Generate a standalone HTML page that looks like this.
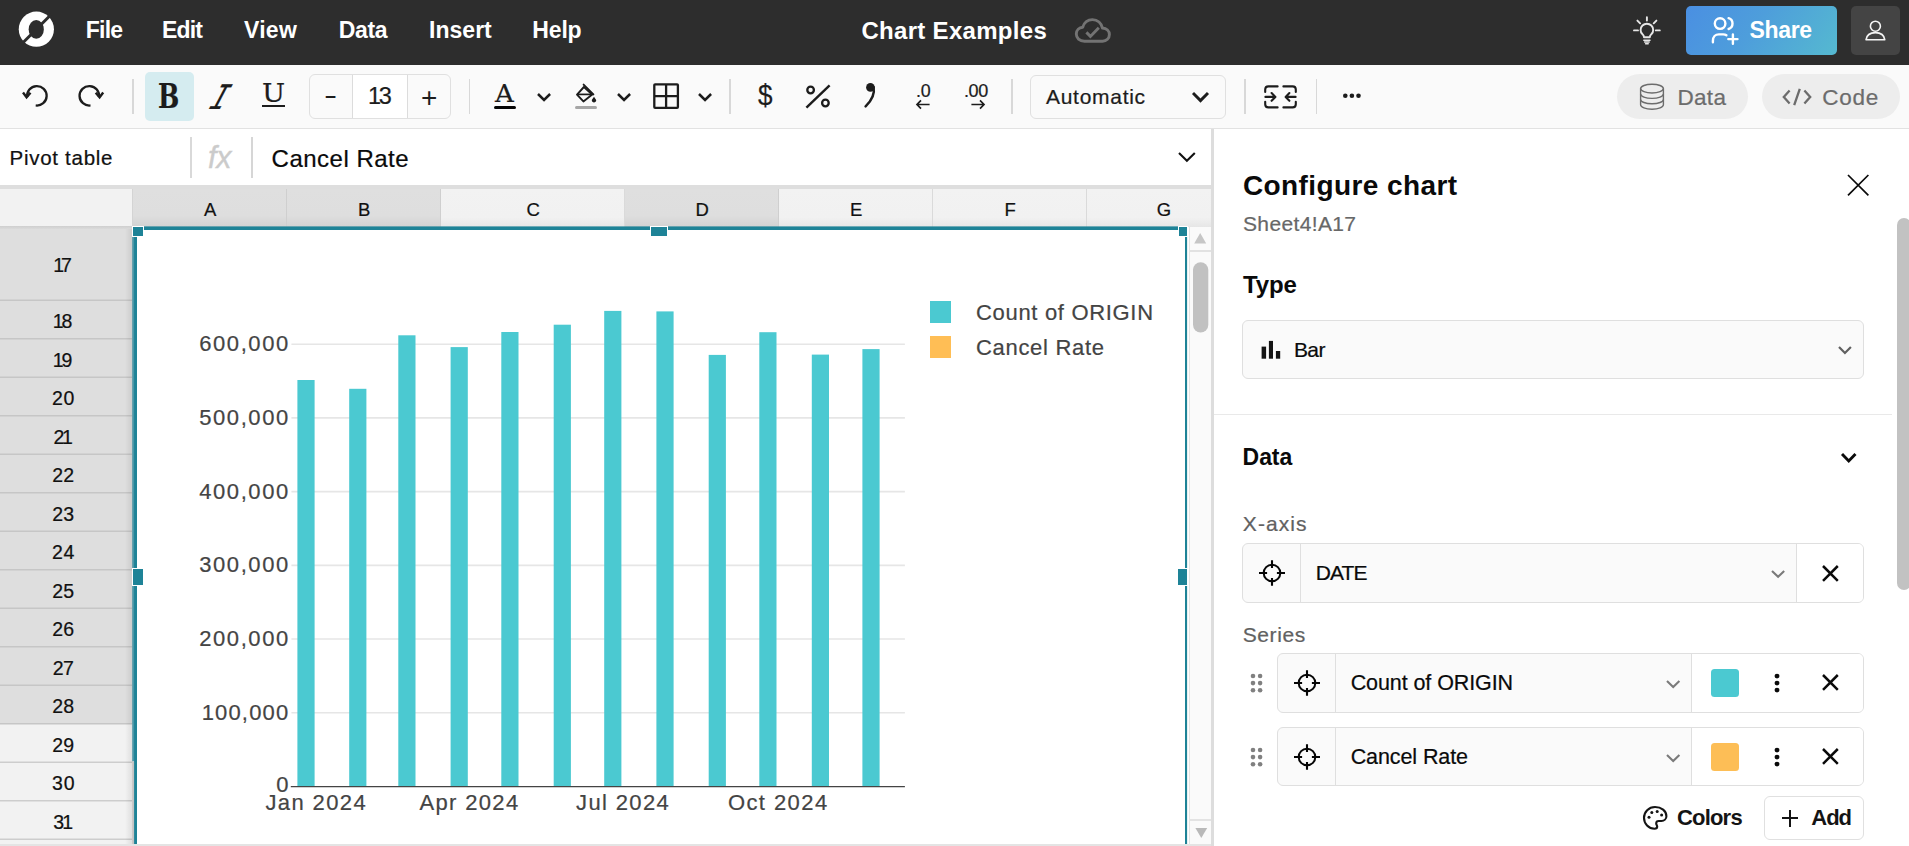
<!DOCTYPE html>
<html lang="en">
<head>
<meta charset="utf-8">
<title>Chart Examples</title>
<style>
*{box-sizing:border-box;margin:0;padding:0}
html,body{width:1909px;height:846px;overflow:hidden;background:#fff}
body{font-family:"Liberation Sans",sans-serif;color:#0a0a0a;position:relative}
.abs{position:absolute}
.t{position:absolute;white-space:nowrap;line-height:1;-webkit-text-stroke:0.22px currentColor}
svg{position:absolute;overflow:visible}
#top{left:0;top:0;width:1909px;height:64.6px;background:#2d2d2d}
#tb{left:0;top:64.6px;width:1909px;height:64.4px;background:#fafafa;border-bottom:1.2px solid #e2e2e2}
.sep{position:absolute;width:1.5px;background:#d8d8d8;top:79.2px;height:34.6px}
#fb{left:0;top:129px;width:1212px;height:56px;background:#fff}
#grid{left:0;top:185px;width:1212px;height:661px;background:#fff;overflow:hidden}
.dk{background:#dedede}.lt{background:#f2f2f2}
#panel{left:1214px;top:129px;width:695px;height:717px;background:#fff}
.box{position:absolute;border:1px solid #dfdfdf;border-radius:6px;background:#fafafa}
.vl{position:absolute;width:1.1px;background:#dfdfdf}
</style>
</head>
<body>
<div id="top" class="abs">
<svg style="left:18px;top:11px" width="37" height="37" viewBox="18 11 37 37">
<circle cx="36.35" cy="29.2" r="17.6" fill="#fff"/>
<ellipse cx="36.25" cy="29.4" rx="7.6" ry="9.4" fill="#2d2d2d"/>
<path d="M21.35 44.2 L51.35 14.2" stroke="#2d2d2d" stroke-width="3" fill="none"/>
</svg>
<div class="t" style="left:85.80px;top:18.60px;font-size:23.0px;letter-spacing:-0.79px;color:#ffffff;font-weight:bold;-webkit-text-stroke:0;">File</div>
<div class="t" style="left:162.10px;top:18.60px;font-size:23.0px;letter-spacing:-0.89px;color:#ffffff;font-weight:bold;-webkit-text-stroke:0;">Edit</div>
<div class="t" style="left:243.90px;top:18.60px;font-size:23.0px;letter-spacing:0.33px;color:#ffffff;font-weight:bold;-webkit-text-stroke:0;">View</div>
<div class="t" style="left:338.70px;top:18.60px;font-size:23.0px;letter-spacing:-0.34px;color:#ffffff;font-weight:bold;-webkit-text-stroke:0;">Data</div>
<div class="t" style="left:429.00px;top:18.60px;font-size:23.0px;letter-spacing:0.03px;color:#ffffff;font-weight:bold;-webkit-text-stroke:0;">Insert</div>
<div class="t" style="left:532.30px;top:18.60px;font-size:23.0px;letter-spacing:-0.16px;color:#ffffff;font-weight:bold;-webkit-text-stroke:0;">Help</div>
<div class="t" style="left:861.40px;top:18.67px;font-size:24.0px;letter-spacing:0.31px;color:#ffffff;font-weight:bold;-webkit-text-stroke:0;">Chart Examples</div>
<svg style="left:1074px;top:17px" width="38" height="27" viewBox="0 0 38 27">
<path d="M10.5 24.2 C5.5 24.2 2.3 21 2.3 17 C2.3 13.2 5.2 10.4 8.8 10.2 C10 5.6 13.8 2.6 18.4 2.6 C23.6 2.6 27.6 6.2 28.4 11 C32.6 11.2 35.4 14 35.4 17.6 C35.4 21.4 32.4 24.2 28.6 24.2 Z" fill="none" stroke="#737373" stroke-width="2.9" stroke-linejoin="round"/>
<path d="M12.4 15.4 L16.4 19.4 L24.8 10.8" fill="none" stroke="#737373" stroke-width="2.9"/>
</svg>
<svg style="left:1630px;top:12px" width="34" height="36" viewBox="1630 12 34 36" fill="none" stroke="#e6e6e6" stroke-width="1.9" stroke-linecap="round">
<path d="M1646.9 17.2V20.6 M1637.4 20.6 L1640.1 23.3 M1656.4 20.6 L1653.7 23.3 M1634 30.4H1638 M1655.8 30.4H1659.8"/>
<path d="M1644 37.3 C1644 35.6 1643.2 34.9 1642.3 34 C1641.2 32.9 1640.6 31.5 1640.6 29.9 C1640.6 26.5 1643.4 23.7 1646.9 23.7 C1650.4 23.7 1653.2 26.5 1653.2 29.9 C1653.2 31.5 1652.6 32.9 1651.5 34 C1650.6 34.9 1649.8 35.6 1649.8 37.3 Z" stroke-linejoin="round"/>
<path d="M1643.8 40.2H1650 M1644.6 42.1H1649.2 M1645.6 43.8H1648.2" stroke-width="1.5"/>
</svg>
<div class="abs" style="left:1686px;top:6px;width:151px;height:49px;border-radius:5px;background:linear-gradient(125deg,#4a8fe2 0%,#4e9edb 45%,#55b9d0 100%)"></div>
<svg style="left:1708px;top:14px" width="34" height="34" viewBox="1708 14 34 34" fill="none" stroke="#fff" stroke-width="2.4" stroke-linecap="round">
<circle cx="1720.1" cy="23.6" r="5.3"/>
<path d="M1712.9 42.3 V40.9 C1712.9 36.9 1715.4 34.4 1718.9 34.4 H1723.2 C1724.6 34.4 1725.6 34.7 1726.4 35.3"/>
<path d="M1728.6 18.2 C1730.9 18.9 1732.5 21 1732.5 23.6 C1732.5 26.2 1730.9 28.3 1728.6 29"/>
<path d="M1732.9 34.4 V43.8 M1728.3 39.1 H1737.5"/>
</svg>
<div class="t" style="left:1749.50px;top:18.50px;font-size:23.0px;letter-spacing:-0.34px;color:#ffffff;font-weight:bold;-webkit-text-stroke:0;">Share</div>
<div class="abs" style="left:1851px;top:6px;width:49px;height:49px;border-radius:5px;background:#444444"></div>
<svg style="left:1865px;top:20px" width="21" height="21" viewBox="0 0 21 21" fill="none" stroke="#f5f5f5" stroke-width="1.6" stroke-linejoin="round">
<circle cx="10.4" cy="6.2" r="5"/>
<path d="M1 19.8 C1.6 15.2 5.4 12.6 10.4 12.6 C15.4 12.6 19.2 15.2 19.8 19.8 Z"/>
</svg>
</div>
<div id="tb" class="abs"></div>
<svg style="left:0;top:0" width="120" height="128" viewBox="0 0 120 128" fill="none" stroke="#1c1c1c" stroke-width="2.3"><path d="M35.71 105.48 A9.75 9.75 0 1 0 27.24 97.16"/><path d="M23.00 92.50 L26.60 97.30 L30.50 92.80" stroke-width="2.4"/><path d="M90.49 105.48 A9.75 9.75 0 1 1 98.96 97.16"/><path d="M103.20 92.50 L99.60 97.30 L95.70 92.80" stroke-width="2.4"/></svg>
<div class="sep" style="left:132.25px"></div>
<div class="sep" style="left:468.75px"></div>
<div class="sep" style="left:729.25px"></div>
<div class="sep" style="left:1011.25px"></div>
<div class="sep" style="left:1244.25px"></div>
<div class="sep" style="left:1315.75px"></div>
<div class="abs" style="left:145px;top:72px;width:49px;height:49px;border-radius:5px;background:#d5ecf0"></div>
<div class="t" style="left:157.6px;top:79.9px;font-family:'DejaVu Serif Condensed','DejaVu Serif',serif;font-weight:bold;font-size:33.7px;color:#1c1c1c;transform:scaleX(.83);transform-origin:left top">B</div>
<div class="t" style="left:207.7px;top:80.6px;font-family:'Liberation Mono',monospace;font-size:37.5px;color:#1c1c1c;transform:skewX(-27.7deg) scaleX(.72);transform-origin:center center">I</div>
<div class="t" style="left:262px;top:81px;font-family:'DejaVu Serif',serif;font-size:25.6px;color:#1c1c1c;transform:scaleX(1.07);transform-origin:left top">U</div>
<div class="abs" style="left:262px;top:105px;width:23px;height:2px;background:#1c1c1c"></div>
<div class="abs" style="left:309px;top:74px;width:142px;height:45px;border:1px solid #e0e0e0;border-radius:6px;background:#fafafa;overflow:hidden"><div class="abs" style="left:42px;top:0;width:56px;height:45px;background:#fff;border-left:1px solid #dcdcdc;border-right:1px solid #dcdcdc"></div></div>
<div class="t" style="left:324.26px;top:81.9px;font-size:26px;color:#1c1c1c;-webkit-text-stroke:0;transform:scaleX(1.52);transform-origin:left top">-</div>
<div class="t" style="left:368.00px;top:85.13px;font-size:23.5px;letter-spacing:-2.28px;color:#1c1c1c;">13</div>
<div class="t" style="left:420.9px;top:83.5px;font-size:28px;color:#1c1c1c;-webkit-text-stroke:0">+</div>
<div class="t" style="left:495.2px;top:80.9px;font-family:'DejaVu Serif',serif;font-size:25px;color:#1c1c1c;transform:scaleX(1.04);transform-origin:left top">A</div>
<div class="abs" style="left:493.8px;top:105.9px;width:22.7px;height:3.1px;background:#050505;border-radius:1.6px"></div>
<svg style="left:535.15px;top:91.16px" width="18.1" height="12.0" viewBox="-3 -3 18.1 12.0"><path d="M0 0 L6.05 6.00 L12.10 0" fill="none" stroke="#1c1c1c" stroke-width="2.5"/></svg>
<svg style="left:575px;top:83px" width="23" height="21" viewBox="575 83 23 21" fill="none" stroke="#1c1c1c" stroke-width="1.9" stroke-linejoin="round">
<path d="M583.9 87 L592.2 94.6 L583.4 101.4 L577 94.6 Z"/>
<path d="M583.6 84.6 L593.4 94.4" stroke-linecap="round"/>
<path d="M577.4 94.4 H592.4" stroke-width="1.7"/>
<path d="M594 96.8 C595.2 98.4 596.2 99.6 596.2 100.6 C596.2 101.7 595.2 102.5 594 102.5 C592.8 102.5 591.8 101.7 591.8 100.6 C591.8 99.6 592.8 98.4 594 96.8 Z" fill="#1c1c1c" stroke="none"/>
</svg>
<div class="abs" style="left:575.1px;top:105.9px;width:21.8px;height:3.1px;background:#a6a6a6;border-radius:1.6px"></div>
<svg style="left:615.15px;top:91.16px" width="18.1" height="12.0" viewBox="-3 -3 18.1 12.0"><path d="M0 0 L6.05 6.00 L12.10 0" fill="none" stroke="#1c1c1c" stroke-width="2.5"/></svg>
<svg style="left:653px;top:83px" width="26" height="26" viewBox="0 0 26 26" fill="none" stroke="#1c1c1c" stroke-width="2.3">
<rect x="1.3" y="1.3" width="23.6" height="23.6" rx="0.8"/>
<path d="M13.1 1.3 V24.9 M1.3 13.1 H24.9"/>
</svg>
<svg style="left:696.15px;top:91.16px" width="18.1" height="12.0" viewBox="-3 -3 18.1 12.0"><path d="M0 0 L6.05 6.00 L12.10 0" fill="none" stroke="#1c1c1c" stroke-width="2.5"/></svg>
<div class="t" style="left:758px;top:81.4px;font-size:29px;transform:scaleX(.9);transform-origin:left top;color:#1c1c1c">$</div>
<svg style="left:805px;top:84px" width="26" height="25" viewBox="0 0 26 25" fill="none" stroke="#1c1c1c" stroke-width="2">
<path d="M1.4 23.6 L24.6 1.4" stroke-width="2.4"/><circle cx="5.6" cy="6" r="3.3" stroke-width="2.3"/><circle cx="20.4" cy="19" r="3.3" stroke-width="2.3"/>
</svg>
<svg style="left:863px;top:82px" width="14" height="26" viewBox="0 0 14 26">
<circle cx="7.4" cy="5.4" r="4.3" fill="#1c1c1c"/>
<path d="M10.6 5 C11.8 11.4 9 18.2 2.6 24.4" fill="none" stroke="#1c1c1c" stroke-width="2.5" stroke-linecap="round"/>
</svg>
<div class="t" style="left:915.6px;top:83px;font-size:17.5px;color:#1c1c1c;letter-spacing:-0.3px;transform:scaleX(1.02);transform-origin:left top">.0</div>
<svg style="left:915px;top:99px" width="16" height="11" viewBox="0 0 16 11" fill="none" stroke="#1c1c1c" stroke-width="1.5">
<path d="M14.6 5.5 H2.2 M6 1.4 L2 5.5 L6 9.6" stroke-width="1.7"/></svg>
<div class="t" style="left:964.4px;top:83px;font-size:17.5px;color:#1c1c1c;letter-spacing:-0.4px;transform:scaleX(1.03);transform-origin:left top">.00</div>
<svg style="left:970px;top:99px" width="16" height="11" viewBox="0 0 16 11" fill="none" stroke="#1c1c1c" stroke-width="1.5">
<path d="M1.4 5.5 H13.8 M10 1.4 L14 5.5 L10 9.6" stroke-width="1.7"/></svg>
<div class="abs" style="left:1030px;top:75px;width:196px;height:44px;border:1px solid #e0e0e0;border-radius:6px;background:#fafafa"></div>
<div class="t" style="left:1046.00px;top:86.26px;font-size:21.0px;letter-spacing:0.71px;color:#1c1c1c;">Automatic</div>
<svg style="left:1190.10px;top:89.59px" width="21.0" height="13.6" viewBox="-3 -3 21.0 13.6"><path d="M0 0 L7.50 7.60 L15.00 0" fill="none" stroke="#1c1c1c" stroke-width="2.9"/></svg>
<svg style="left:1263px;top:84px" width="35" height="26" viewBox="0 0 35 26" fill="none" stroke="#1c1c1c" stroke-width="2.1" stroke-linecap="round" stroke-linejoin="round">
<path d="M14.6 2.4 H5.4 C3.4 2.4 2.2 3.6 2.2 5.6 V8"/>
<path d="M14.6 23.4 H5.4 C3.4 23.4 2.2 22.2 2.2 20.2 V17.8"/>
<path d="M20.4 2.4 H29.6 C31.6 2.4 32.8 3.6 32.8 5.6 V8"/>
<path d="M20.4 23.4 H29.6 C31.6 23.4 32.8 22.2 32.8 20.2 V17.8"/>
<path d="M2.4 12.9 H12 M8.6 9 L12.4 12.9 L8.6 16.8"/>
<path d="M32.6 12.9 H23 M26.4 9 L22.6 12.9 L26.4 16.8"/>
</svg>
<svg style="left:1340px;top:90px" width="24" height="12" viewBox="1340 90 24 12" fill="#1c1c1c">
<circle cx="1345.3" cy="95.8" r="2.3"/><circle cx="1351.9" cy="95.8" r="2.3"/><circle cx="1358.5" cy="95.8" r="2.3"/></svg>
<div class="abs" style="left:1617px;top:74px;width:131px;height:45px;border-radius:23px;background:#ededed"></div>
<svg style="left:1639px;top:83px" width="26" height="28" viewBox="0 0 26 28" fill="none" stroke="#6c6c6c" stroke-width="1.4">
<ellipse cx="13" cy="5.6" rx="11.4" ry="4.4"/>
<path d="M1.6 5.6 V21.8 C1.6 24.2 6.6 26.2 13 26.2 C19.4 26.2 24.4 24.2 24.4 21.8 V5.6"/>
<path d="M1.6 11 C1.6 13.4 6.6 15.4 13 15.4 C19.4 15.4 24.4 13.4 24.4 11"/>
<path d="M1.6 16.4 C1.6 18.8 6.6 20.8 13 20.8 C19.4 20.8 24.4 18.8 24.4 16.4"/>
</svg>
<div class="t" style="left:1677.40px;top:86.66px;font-size:22.5px;letter-spacing:0.34px;color:#6c6c6c;">Data</div>
<div class="abs" style="left:1762px;top:74px;width:138px;height:45px;border-radius:23px;background:#ededed"></div>
<svg style="left:1782px;top:88.4px" width="30" height="18" viewBox="0 0 30 18" fill="none" stroke="#6c6c6c" stroke-width="2.3">
<path d="M7.6 2.6 L1.8 9 L7.6 15.4 M22.4 2.6 L28.2 9 L22.4 15.4 M17.8 0.8 L12.2 17.2"/>
</svg>
<div class="t" style="left:1822.20px;top:86.66px;font-size:22.5px;letter-spacing:0.77px;color:#6c6c6c;">Code</div>
<div id="fb" class="abs"></div>
<div class="t" style="left:9.60px;top:147.72px;font-size:20.5px;letter-spacing:0.71px;color:#111;">Pivot table</div>
<div class="abs" style="left:190.4px;top:136.5px;width:1.4px;height:41px;background:#d9d9d9"></div>
<div class="abs" style="left:251.3px;top:136.5px;width:1.4px;height:41px;background:#d6d6d6"></div>
<div class="t" style="left:208px;top:141.8px;font-size:30.5px;font-style:italic;color:#cbcbcb;-webkit-text-stroke:0.35px #cbcbcb;letter-spacing:-0.2px">fx</div>
<div class="t" style="left:271.60px;top:147.27px;font-size:24.0px;letter-spacing:0.49px;color:#0a0a0a;">Cancel Rate</div>
<svg style="left:1175.80px;top:150.43px" width="21.8" height="13.8" viewBox="-3 -3 21.8 13.8"><path d="M0 0 L7.90 7.80 L15.80 0" fill="none" stroke="#111" stroke-width="2.1"/></svg>
<div id="grid" class="abs">
<div class="abs" style="left:0;top:0;width:1212px;height:4px;background:#dedede"></div>
<div class="abs lt" style="left:0;top:4px;width:133px;height:37px"></div>
<div class="abs" style="left:133px;top:4px;width:154px;height:38px;background:linear-gradient(#dfdfdf 0%,#dedede 70%,#d2d2d2 100%);border-right:1.4px solid #cfcfcf"></div>
<div class="abs" style="left:287px;top:4px;width:154px;height:38px;background:linear-gradient(#dfdfdf 0%,#dedede 70%,#d2d2d2 100%);border-right:1.4px solid #cfcfcf"></div>
<div class="abs" style="left:441px;top:4px;width:184px;height:38px;background:linear-gradient(#f2f2f2 0%,#f1f1f1 75%,#e6e6e6 100%);border-right:1.4px solid #dadada"></div>
<div class="abs" style="left:625px;top:4px;width:154px;height:38px;background:linear-gradient(#dfdfdf 0%,#dedede 70%,#d2d2d2 100%);border-right:1.4px solid #cfcfcf"></div>
<div class="abs" style="left:779px;top:4px;width:154px;height:38px;background:linear-gradient(#f2f2f2 0%,#f1f1f1 75%,#e6e6e6 100%);border-right:1.4px solid #dadada"></div>
<div class="abs" style="left:933px;top:4px;width:154px;height:38px;background:linear-gradient(#f2f2f2 0%,#f1f1f1 75%,#e6e6e6 100%);border-right:1.4px solid #dadada"></div>
<div class="abs" style="left:1087px;top:4px;width:154px;height:38px;background:linear-gradient(#f2f2f2 0%,#f1f1f1 75%,#e6e6e6 100%);border-right:1.4px solid #dadada"></div>
<div class="abs" style="left:131.6px;top:4px;width:1.4px;height:37px;background:#d4d4d4"></div>
<div class="abs" style="left:0;top:44.0px;width:133px;height:71.8px;background:#dedede"></div>
<div class="abs" style="left:0;top:115.8px;width:133px;height:38.5px;background:#dedede"></div>
<div class="abs" style="left:0;top:154.2px;width:133px;height:38.5px;background:#dedede"></div>
<div class="abs" style="left:0;top:192.8px;width:133px;height:38.5px;background:#dedede"></div>
<div class="abs" style="left:0;top:231.2px;width:133px;height:38.5px;background:#dedede"></div>
<div class="abs" style="left:0;top:269.8px;width:133px;height:38.5px;background:#dedede"></div>
<div class="abs" style="left:0;top:308.2px;width:133px;height:38.5px;background:#dedede"></div>
<div class="abs" style="left:0;top:346.8px;width:133px;height:38.5px;background:#dedede"></div>
<div class="abs" style="left:0;top:385.2px;width:133px;height:38.5px;background:#dedede"></div>
<div class="abs" style="left:0;top:423.8px;width:133px;height:38.5px;background:#dedede"></div>
<div class="abs" style="left:0;top:462.2px;width:133px;height:38.5px;background:#dedede"></div>
<div class="abs" style="left:0;top:500.8px;width:133px;height:38.5px;background:#dedede"></div>
<div class="abs" style="left:0;top:539.2px;width:133px;height:38.5px;background:#f2f2f2"></div>
<div class="abs" style="left:0;top:577.8px;width:133px;height:38.5px;background:#f2f2f2"></div>
<div class="abs" style="left:0;top:616.2px;width:133px;height:38.5px;background:#f2f2f2"></div>
<div class="abs" style="left:0;top:654.8px;width:133px;height:38.5px;background:#f2f2f2"></div>
<svg style="left:0;top:0" width="133" height="661" viewBox="0 185 133 661"><line x1="0" x2="132" y1="300.20" y2="300.20" stroke="#c6c6c6" stroke-width="1.5"/><line x1="0" x2="132" y1="338.70" y2="338.70" stroke="#c6c6c6" stroke-width="1.5"/><line x1="0" x2="132" y1="377.20" y2="377.20" stroke="#c6c6c6" stroke-width="1.5"/><line x1="0" x2="132" y1="415.70" y2="415.70" stroke="#c6c6c6" stroke-width="1.5"/><line x1="0" x2="132" y1="454.20" y2="454.20" stroke="#c6c6c6" stroke-width="1.5"/><line x1="0" x2="132" y1="492.70" y2="492.70" stroke="#c6c6c6" stroke-width="1.5"/><line x1="0" x2="132" y1="531.20" y2="531.20" stroke="#c6c6c6" stroke-width="1.5"/><line x1="0" x2="132" y1="569.70" y2="569.70" stroke="#c6c6c6" stroke-width="1.5"/><line x1="0" x2="132" y1="608.20" y2="608.20" stroke="#c6c6c6" stroke-width="1.5"/><line x1="0" x2="132" y1="646.70" y2="646.70" stroke="#c6c6c6" stroke-width="1.5"/><line x1="0" x2="132" y1="685.20" y2="685.20" stroke="#c6c6c6" stroke-width="1.5"/><line x1="0" x2="132" y1="723.70" y2="723.70" stroke="#c6c6c6" stroke-width="1.5"/><line x1="0" x2="132" y1="762.20" y2="762.20" stroke="#cdcdcd" stroke-width="1.5"/><line x1="0" x2="132" y1="800.70" y2="800.70" stroke="#cdcdcd" stroke-width="1.5"/><line x1="0" x2="132" y1="839.20" y2="839.20" stroke="#cdcdcd" stroke-width="1.5"/></svg>
<div class="abs" style="left:0;top:40.599999999999994px;width:133px;height:3.6px;background:linear-gradient(#cfcfcf,#dadada)"></div>
<div class="abs" style="left:125px;top:44px;width:8px;height:620px;background:linear-gradient(90deg,rgba(0,0,0,0),rgba(0,0,0,0.09))"></div>
</div>
<div class="t" style="left:204.00px;top:200.59px;font-size:18.5px;letter-spacing:0.0px;color:#111;">A</div>
<div class="t" style="left:358.05px;top:200.59px;font-size:18.5px;letter-spacing:0.0px;color:#111;">B</div>
<div class="t" style="left:526.54px;top:200.59px;font-size:18.5px;letter-spacing:0.0px;color:#111;">C</div>
<div class="t" style="left:695.54px;top:200.59px;font-size:18.5px;letter-spacing:0.0px;color:#111;">D</div>
<div class="t" style="left:850.05px;top:200.59px;font-size:18.5px;letter-spacing:0.0px;color:#111;">E</div>
<div class="t" style="left:1004.56px;top:200.59px;font-size:18.5px;letter-spacing:0.0px;color:#111;">F</div>
<div class="t" style="left:1156.79px;top:200.59px;font-size:18.5px;letter-spacing:0.0px;color:#111;">G</div>
<div class="t" style="left:53.30px;top:255.96px;font-size:19.5px;letter-spacing:-3.04px;color:#111;">17</div>
<div class="t" style="left:52.80px;top:312.21px;font-size:19.5px;letter-spacing:-2.04px;color:#111;">18</div>
<div class="t" style="left:52.80px;top:350.71px;font-size:19.5px;letter-spacing:-2.04px;color:#111;">19</div>
<div class="t" style="left:52.05px;top:389.21px;font-size:19.5px;letter-spacing:0.66px;color:#111;">20</div>
<div class="t" style="left:53.50px;top:427.71px;font-size:19.5px;letter-spacing:-2.24px;color:#111;">21</div>
<div class="t" style="left:52.35px;top:466.21px;font-size:19.5px;letter-spacing:0.05px;color:#111;">22</div>
<div class="t" style="left:52.35px;top:504.71px;font-size:19.5px;letter-spacing:0.05px;color:#111;">23</div>
<div class="t" style="left:52.05px;top:543.21px;font-size:19.5px;letter-spacing:0.66px;color:#111;">24</div>
<div class="t" style="left:52.35px;top:581.71px;font-size:19.5px;letter-spacing:0.05px;color:#111;">25</div>
<div class="t" style="left:52.25px;top:620.21px;font-size:19.5px;letter-spacing:0.26px;color:#111;">26</div>
<div class="t" style="left:52.70px;top:658.71px;font-size:19.5px;letter-spacing:-0.64px;color:#111;">27</div>
<div class="t" style="left:52.35px;top:697.21px;font-size:19.5px;letter-spacing:0.05px;color:#111;">28</div>
<div class="t" style="left:52.35px;top:735.71px;font-size:19.5px;letter-spacing:0.05px;color:#111;">29</div>
<div class="t" style="left:51.95px;top:774.21px;font-size:19.5px;letter-spacing:0.86px;color:#111;">30</div>
<div class="t" style="left:53.30px;top:812.71px;font-size:19.5px;letter-spacing:-1.84px;color:#111;">31</div>
<div class="abs" style="left:137px;top:230px;width:1048px;height:616px;background:#fff"></div>
<svg style="left:0;top:0" width="1212" height="846" viewBox="0 0 1212 846"><rect x="134" y="226.4" width="3" height="617.6" fill="#1e8397"/><rect x="132.2" y="226.4" width="1.9" height="535" fill="#4c97a7"/><rect x="132.2" y="761.4" width="1.9" height="82.6" fill="#c4c4c4"/><rect x="132.3" y="226.4" width="1054.8" height="3.6" fill="#1e8397"/><rect x="1185" y="226" width="2.1" height="618" fill="#1e8397"/></svg>
<svg style="left:0;top:0" width="1212" height="846" viewBox="0 0 1212 846"><line x1="291.4" x2="904.9" y1="712.78" y2="712.78" stroke="#e6e6e6" stroke-width="1.6"/><line x1="291.4" x2="904.9" y1="639.06" y2="639.06" stroke="#e6e6e6" stroke-width="1.6"/><line x1="291.4" x2="904.9" y1="565.34" y2="565.34" stroke="#e6e6e6" stroke-width="1.6"/><line x1="291.4" x2="904.9" y1="491.62" y2="491.62" stroke="#e6e6e6" stroke-width="1.6"/><line x1="291.4" x2="904.9" y1="417.90" y2="417.90" stroke="#e6e6e6" stroke-width="1.6"/><line x1="291.4" x2="904.9" y1="344.18" y2="344.18" stroke="#e6e6e6" stroke-width="1.6"/><rect x="297.4" y="380.0" width="17.2" height="406.5" fill="#4bc9d1"/><rect x="349.2" y="388.8" width="17.2" height="397.7" fill="#4bc9d1"/><rect x="398.3" y="335.3" width="17.2" height="451.2" fill="#4bc9d1"/><rect x="450.6" y="347.1" width="17.2" height="439.4" fill="#4bc9d1"/><rect x="501.3" y="332.0" width="17.2" height="454.5" fill="#4bc9d1"/><rect x="553.7" y="324.7" width="17.2" height="461.8" fill="#4bc9d1"/><rect x="604.2" y="310.9" width="17.2" height="475.6" fill="#4bc9d1"/><rect x="656.4" y="311.4" width="17.2" height="475.1" fill="#4bc9d1"/><rect x="708.7" y="354.9" width="17.2" height="431.6" fill="#4bc9d1"/><rect x="759.3" y="332.2" width="17.2" height="454.3" fill="#4bc9d1"/><rect x="811.8" y="354.6" width="17.2" height="431.9" fill="#4bc9d1"/><rect x="862.4" y="349.1" width="17.2" height="437.4" fill="#4bc9d1"/><line x1="290.8" x2="904.9" y1="786.6" y2="786.6" stroke="#444" stroke-width="1.3"/></svg>
<div class="t" style="left:201.70px;top:701.83px;font-size:22.0px;letter-spacing:1.16px;color:#444444;">100,000</div>
<div class="t" style="left:199.20px;top:628.13px;font-size:22.0px;letter-spacing:1.58px;color:#444444;">200,000</div>
<div class="t" style="left:199.20px;top:554.43px;font-size:22.0px;letter-spacing:1.58px;color:#444444;">300,000</div>
<div class="t" style="left:199.20px;top:480.73px;font-size:22.0px;letter-spacing:1.58px;color:#444444;">400,000</div>
<div class="t" style="left:199.20px;top:407.03px;font-size:22.0px;letter-spacing:1.58px;color:#444444;">500,000</div>
<div class="t" style="left:199.20px;top:333.33px;font-size:22.0px;letter-spacing:1.58px;color:#444444;">600,000</div>
<div class="t" style="left:276.30px;top:774.33px;font-size:22.0px;letter-spacing:0.0px;color:#444444;">0</div>
<div class="t" style="left:265.50px;top:792.03px;font-size:22.0px;letter-spacing:1.37px;color:#444444;">Jan 2024</div>
<div class="t" style="left:419.40px;top:792.03px;font-size:22.0px;letter-spacing:1.35px;color:#444444;">Apr 2024</div>
<div class="t" style="left:576.00px;top:792.03px;font-size:22.0px;letter-spacing:1.38px;color:#444444;">Jul 2024</div>
<div class="t" style="left:727.90px;top:792.03px;font-size:22.0px;letter-spacing:1.43px;color:#444444;">Oct 2024</div>
<div class="abs" style="left:929.5px;top:301.3px;width:21.4px;height:21.4px;background:#4bc9d1"></div>
<div class="abs" style="left:929.5px;top:336.3px;width:21.4px;height:21.4px;background:#ffbe55"></div>
<div class="t" style="left:976.00px;top:302.13px;font-size:22.0px;letter-spacing:0.68px;color:#444444;">Count of ORIGIN</div>
<div class="t" style="left:976.00px;top:337.13px;font-size:22.0px;letter-spacing:0.69px;color:#444444;">Cancel Rate</div>
<div class="abs" style="left:133.4px;top:226.6px;width:9.4px;height:9.2px;background:#1e8397;box-shadow:0 0 0 1px #fff"></div>
<div class="abs" style="left:650.6px;top:226.6px;width:16.6px;height:9.4px;background:#1e8397;box-shadow:0 0 0 1px #fff"></div>
<div class="abs" style="left:1179.2px;top:227.2px;width:7.9px;height:8.4px;background:#1e8397;box-shadow:0 0 0 1px #fff"></div>
<div class="abs" style="left:133.2px;top:568.6px;width:9.4px;height:16px;background:#1e8397;box-shadow:0 0 0 1px #fff"></div>
<div class="abs" style="left:1178.2px;top:568.6px;width:9px;height:16px;background:#1e8397;box-shadow:0 0 0 1px #fff"></div>
<div class="abs" style="left:0;top:844px;width:1212px;height:2px;background:#e4e4e4"></div>
<div class="abs" style="left:1189px;top:227px;width:22.4px;height:617px;background:#fafafa;border-left:1px solid #e4e4e4"></div>
<div class="abs" style="left:1190px;top:250.2px;width:21.5px;height:1.6px;background:#e2e2e2"></div>
<div class="abs" style="left:1190px;top:819px;width:21.5px;height:1.5px;background:#e3e3e3"></div>
<svg style="left:1194.4px;top:233px" width="13" height="11" viewBox="0 0 13 11"><path d="M6.2 0 L12.2 10.4 H0.2 Z" fill="#c6c6c6"/></svg>
<svg style="left:1194.5px;top:828px" width="13" height="10" viewBox="0 0 13 10"><path d="M6.3 10 L12.2 0 H0.4 Z" fill="#b9b9b9"/></svg>
<svg style="left:0;top:0" width="1212" height="400" viewBox="0 0 1212 400"><rect x="1193" y="262.2" width="15.3" height="70.2" rx="7.65" fill="#c1c1c1"/></svg>
<div class="abs" style="left:1211.2px;top:129px;width:2.7px;height:717px;background:#dddddd"></div>
<div id="panel" class="abs"></div>
<div class="t" style="left:1242.90px;top:171.85px;font-size:28.0px;letter-spacing:0.41px;color:#0a0a0a;font-weight:bold;-webkit-text-stroke:0;">Configure chart</div>
<svg style="left:1845.8px;top:172.8px" width="24.4" height="24.4" viewBox="-12.2 -12.2 24.4 24.4"><path d="M-10.2 -10.2 L10.2 10.2 M10.2 -10.2 L-10.2 10.2" stroke="#0a0a0a" stroke-width="1.7" fill="none"/></svg>
<div class="t" style="left:1243.00px;top:213.26px;font-size:21.0px;letter-spacing:0.36px;color:#676767;">Sheet4!A17</div>
<div class="t" style="left:1243.00px;top:272.97px;font-size:24.0px;letter-spacing:-0.11px;color:#0a0a0a;font-weight:bold;-webkit-text-stroke:0;">Type</div>
<div class="box" style="left:1242px;top:320px;width:622px;height:59px"></div>
<svg style="left:1261px;top:340px" width="20" height="20" viewBox="0 0 20 20" fill="#141414">
<rect x="0.6" y="6.6" width="4.5" height="12.1"/><rect x="7.9" y="0.9" width="4.1" height="17.8"/><rect x="14.9" y="11" width="4.3" height="7.7"/></svg>
<div class="t" style="left:1293.90px;top:339.26px;font-size:21.0px;letter-spacing:-0.53px;color:#0a0a0a;">Bar</div>
<svg style="left:1836.05px;top:344.31px" width="17.9" height="12.0" viewBox="-3 -3 17.9 12.0"><path d="M0 0 L5.95 6.00 L11.90 0" fill="none" stroke="#606060" stroke-width="2.2"/></svg>
<div class="abs" style="left:1214px;top:413.8px;width:678px;height:1.2px;background:#e9e9e9"></div>
<div class="t" style="left:1242.60px;top:445.90px;font-size:23.0px;letter-spacing:-0.07px;color:#0a0a0a;font-weight:bold;-webkit-text-stroke:0;">Data</div>
<svg style="left:1838.85px;top:450.94px" width="19.5" height="12.9" viewBox="-3 -3 19.5 12.9"><path d="M0 0 L6.75 6.90 L13.50 0" fill="none" stroke="#0a0a0a" stroke-width="2.9"/></svg>
<div class="t" style="left:1242.80px;top:513.06px;font-size:21.0px;letter-spacing:1.08px;color:#616161;">X-axis</div>
<div class="box" style="left:1242px;top:543px;width:622px;height:60px;overflow:hidden"><div class="abs" style="right:0;top:0;width:66.6px;height:60px;background:#fff"></div></div>
<div class="vl" style="left:1300px;top:544px;height:58px"></div>
<div class="vl" style="left:1796px;top:544px;height:58px"></div>
<svg style="left:1258px;top:558.8px" width="28" height="28" viewBox="-14 -14 28 28" fill="none" stroke="#050505" stroke-width="2">
<circle cx="0" cy="0" r="8.3"/><path d="M0 -12.8 V-4.9 M0 12.8 V4.9 M-13 0 H-4.9 M13 0 H4.9" stroke-width="2.1"/></svg>
<div class="t" style="left:1315.80px;top:562.26px;font-size:21.0px;letter-spacing:-0.93px;color:#0a0a0a;">DATE</div>
<svg style="left:1768.90px;top:567.93px" width="18.2" height="11.8" viewBox="-3 -3 18.2 11.8"><path d="M0 0 L6.10 5.80 L12.20 0" fill="none" stroke="#7a7a7a" stroke-width="2.1"/></svg>
<svg style="left:1820.5px;top:563.7px" width="18.8" height="18.8" viewBox="-9.4 -9.4 18.8 18.8"><path d="M-7.4 -7.4 L7.4 7.4 M7.4 -7.4 L-7.4 7.4" stroke="#0a0a0a" stroke-width="2.5" fill="none"/></svg>
<div class="t" style="left:1242.80px;top:624.06px;font-size:21.0px;letter-spacing:0.57px;color:#616161;">Series</div>
<div class="box" style="left:1277px;top:653px;width:587px;height:60px;overflow:hidden"><div class="abs" style="right:0;top:0;width:171.6px;height:60px;background:#fff"></div></div>
<div class="vl" style="left:1335px;top:654px;height:58px"></div>
<div class="vl" style="left:1691px;top:654px;height:58px"></div>
<svg style="left:1249.6px;top:672.8px" width="14" height="21" viewBox="0 0 14 21" fill="#808080"><circle cx="3" cy="3" r="2.3"/><circle cx="3" cy="10.1" r="2.3"/><circle cx="3" cy="17.2" r="2.3"/><circle cx="10.1" cy="3" r="2.3"/><circle cx="10.1" cy="10.1" r="2.3"/><circle cx="10.1" cy="17.2" r="2.3"/></svg>
<svg style="left:1293px;top:668.9px" width="28" height="28" viewBox="-14 -14 28 28" fill="none" stroke="#050505" stroke-width="2">
<circle cx="0" cy="0" r="8.3"/><path d="M0 -12.8 V-4.9 M0 12.8 V4.9 M-13 0 H-4.9 M13 0 H4.9" stroke-width="2.1"/></svg>
<div class="t" style="left:1350.70px;top:672.79px;font-size:21.5px;letter-spacing:-0.09px;color:#0a0a0a;">Count of ORIGIN</div>
<svg style="left:1663.90px;top:677.53px" width="18.4" height="12.0" viewBox="-3 -3 18.4 12.0"><path d="M0 0 L6.20 6.00 L12.40 0" fill="none" stroke="#7a7a7a" stroke-width="2.1"/></svg>
<div class="abs" style="left:1711px;top:668.6999999999999px;width:28.2px;height:28.4px;border-radius:3.5px;background:#4bc9d1"></div>
<svg style="left:1773.7px;top:672.9px" width="6" height="20" viewBox="0 0 6 20" fill="#0a0a0a"><circle cx="3" cy="3.1" r="2.45"/><circle cx="3" cy="10.1" r="2.45"/><circle cx="3" cy="17.1" r="2.45"/></svg>
<svg style="left:1820.5px;top:673.4px" width="18.8" height="18.8" viewBox="-9.4 -9.4 18.8 18.8"><path d="M-7.4 -7.4 L7.4 7.4 M7.4 -7.4 L-7.4 7.4" stroke="#0a0a0a" stroke-width="2.5" fill="none"/></svg>
<div class="box" style="left:1277px;top:727px;width:587px;height:59px;overflow:hidden"><div class="abs" style="right:0;top:0;width:171.6px;height:60px;background:#fff"></div></div>
<div class="vl" style="left:1335px;top:728px;height:57px"></div>
<div class="vl" style="left:1691px;top:728px;height:57px"></div>
<svg style="left:1249.6px;top:746.8px" width="14" height="21" viewBox="0 0 14 21" fill="#808080"><circle cx="3" cy="3" r="2.3"/><circle cx="3" cy="10.1" r="2.3"/><circle cx="3" cy="17.2" r="2.3"/><circle cx="10.1" cy="3" r="2.3"/><circle cx="10.1" cy="10.1" r="2.3"/><circle cx="10.1" cy="17.2" r="2.3"/></svg>
<svg style="left:1293px;top:742.9px" width="28" height="28" viewBox="-14 -14 28 28" fill="none" stroke="#050505" stroke-width="2">
<circle cx="0" cy="0" r="8.3"/><path d="M0 -12.8 V-4.9 M0 12.8 V4.9 M-13 0 H-4.9 M13 0 H4.9" stroke-width="2.1"/></svg>
<div class="t" style="left:1350.70px;top:746.79px;font-size:21.5px;letter-spacing:-0.1px;color:#0a0a0a;">Cancel Rate</div>
<svg style="left:1663.90px;top:751.53px" width="18.4" height="12.0" viewBox="-3 -3 18.4 12.0"><path d="M0 0 L6.20 6.00 L12.40 0" fill="none" stroke="#7a7a7a" stroke-width="2.1"/></svg>
<div class="abs" style="left:1711px;top:742.6999999999999px;width:28.2px;height:28.4px;border-radius:3.5px;background:#fdbe56"></div>
<svg style="left:1773.7px;top:746.9px" width="6" height="20" viewBox="0 0 6 20" fill="#0a0a0a"><circle cx="3" cy="3.1" r="2.45"/><circle cx="3" cy="10.1" r="2.45"/><circle cx="3" cy="17.1" r="2.45"/></svg>
<svg style="left:1820.5px;top:747.4px" width="18.8" height="18.8" viewBox="-9.4 -9.4 18.8 18.8"><path d="M-7.4 -7.4 L7.4 7.4 M7.4 -7.4 L-7.4 7.4" stroke="#0a0a0a" stroke-width="2.5" fill="none"/></svg>
<svg style="left:1642px;top:805px" width="26" height="26" viewBox="0 0 26 26" fill="none" stroke="#141414" stroke-width="2.1">
<path d="M13 2 C6.8 2 2 6.8 2 12.8 C2 18.8 6.6 23.8 12.6 23.8 C14.2 23.8 15.2 22.8 15.2 21.6 C15.2 20.4 14.2 19.6 14.2 18.4 C14.2 17 15.4 16 16.8 16 H19.4 C22.2 16 24.4 13.8 24.4 11.2 C24.4 6 19.4 2 13 2 Z"/>
<circle cx="7" cy="12.2" r="1.5" fill="#141414" stroke="none"/><circle cx="9.8" cy="7.6" r="1.5" fill="#141414" stroke="none"/><circle cx="15.2" cy="6.6" r="1.5" fill="#141414" stroke="none"/><circle cx="19.6" cy="10" r="1.5" fill="#141414" stroke="none"/>
</svg>
<div class="t" style="left:1676.90px;top:806.93px;font-size:22.0px;letter-spacing:-0.79px;color:#141414;font-weight:bold;-webkit-text-stroke:0;">Colors</div>
<div class="abs" style="left:1764px;top:796.2px;width:100px;height:43.6px;border:1px solid #e0e0e0;border-radius:6px;background:#fff"></div>
<div class="abs" style="left:1781.6px;top:817.2px;width:16.8px;height:2.2px;background:#141414"></div>
<div class="abs" style="left:1788.9px;top:809.9px;width:2.2px;height:16.9px;background:#141414"></div>
<div class="t" style="left:1811.30px;top:806.93px;font-size:22.0px;letter-spacing:-1.04px;color:#141414;font-weight:bold;-webkit-text-stroke:0;">Add</div>
<div class="abs" style="left:1897.2px;top:217.8px;width:14px;height:372.4px;border-radius:7px;background:#c2c2c2"></div>
</body>
</html>
